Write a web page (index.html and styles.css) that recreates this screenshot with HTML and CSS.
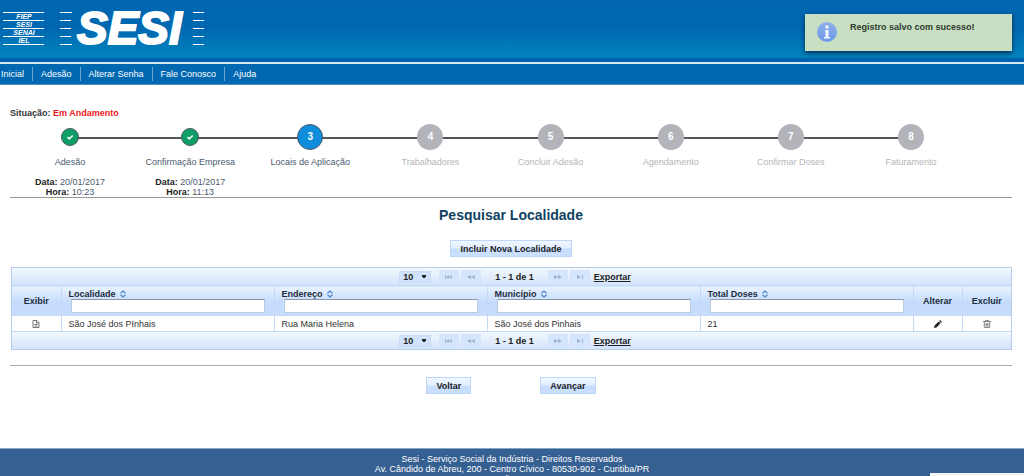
FILE: index.html
```html
<!DOCTYPE html>
<html lang="pt-BR">
<head>
<meta charset="utf-8">
<title>SESI - Pesquisar Localidade</title>
<link rel="stylesheet" href="styles.css">
</head>
<body>
<svg class="sprite" aria-hidden="true">
  <symbol id="check" viewBox="0 0 10 10"><path d="M2.500 5l1.800 1.800L7.700 3.500" fill="none" stroke="#fff" stroke-width="1.700"/></symbol>
  <symbol id="sort" viewBox="0 0 6 8"><path d="M.5 3.200L3 1l2.500 2.200M.5 4.800L3 7l2.500-2.200" fill="none" stroke="#4a84c8" stroke-width="1.200"/></symbol>
  <symbol id="first" viewBox="0 0 8 6"><path d="M0 1h1v4H0zM4 1v4L1 3zM7 1v4L4 3z" fill="#9bb4cf"/></symbol>
  <symbol id="prev" viewBox="0 0 8 6"><path d="M4 1v4L0 3zM8 1v4L4 3z" fill="#9bb4cf"/></symbol>
  <symbol id="next" viewBox="0 0 8 6"><path d="M0 1v4l4-2zM4 1v4l4-2z" fill="#9bb4cf"/></symbol>
  <symbol id="last" viewBox="0 0 8 6"><path d="M1 1v4l4-2zM6 1h1v4H6z" fill="#9bb4cf"/></symbol>
</svg>

<header class="header">
  <svg class="brand" width="206" height="58" viewBox="0 0 206 58" role="img" aria-label="FIEP SESI SENAI IEL - SESI">
    <path d="M3 12.500h41M3 20.500h41M3 28.500h41M3 36.500h41M3 44.500h41M60 12.500h12M60 20.500h11M60 28.500h11M60 36.500h11M60 44.500h12M193 12.500h11M193 20.500h11M193 28.500h11M193 36.500h11M193 44.500h11" stroke="#fff" stroke-width="1.200"/>
    <g class="brand-small">
      <text x="24" y="19">FIEP</text>
      <text x="24" y="27">SESI</text>
      <text x="24" y="35">SENAI</text>
      <text x="24" y="43">IEL</text>
    </g>
    <text class="brand-name" x="77" y="44">SESI</text>
  </svg>
</header>

<div class="toast" role="status">
  <svg width="22" height="22" viewBox="0 0 22 22" aria-hidden="true">
    <defs><linearGradient id="info" x1="0" y1="0" x2="0" y2="1"><stop offset="0" stop-color="#8fb2e8"/><stop offset="1" stop-color="#6c97ea"/></linearGradient></defs>
    <circle cx="11" cy="11" r="10" fill="url(#info)"/>
    <path d="M9.500 4.500h3v3h-3zM9 9h3.500v7H14v1.500H8V16h1.500v-5.500H9z" fill="#f3f8ff"/>
  </svg>
  <p>Registro salvo com sucesso!</p>
</div>

<nav class="nav">
  <a href="#">Inicial</a><a href="#">Adesão</a><a href="#">Alterar Senha</a><a href="#">Fale Conosco</a><a href="#">Ajuda</a>
</nav>

<main class="main">
  <p class="status">Situação: <span>Em Andamento</span></p>

  <ol class="steps">
    <li class="done"><span class="dot"><svg width="10" height="10"><use href="#check"/></svg></span><span class="name">Adesão</span><span><b>Data:</b> 20/01/2017</span><span><b>Hora:</b> 10:23</span></li>
    <li class="done"><span class="dot"><svg width="10" height="10"><use href="#check"/></svg></span><span class="name">Confirmação Empresa</span><span><b>Data:</b> 20/01/2017</span><span><b>Hora:</b> 11:13</span></li>
    <li class="current"><span class="dot">3</span><span class="name">Locais de Aplicação</span></li>
    <li><span class="dot">4</span><span class="name">Trabalhadores</span></li>
    <li><span class="dot">5</span><span class="name">Concluir Adesão</span></li>
    <li><span class="dot">6</span><span class="name">Agendamento</span></li>
    <li><span class="dot">7</span><span class="name">Confirmar Doses</span></li>
    <li><span class="dot">8</span><span class="name">Faturamento</span></li>
  </ol>

  <h1>Pesquisar Localidade</h1>
  <div class="center"><button class="btn" type="button">Incluir Nova Localidade</button></div>

  <section class="grid">
    <div class="pager">
      <select aria-label="Linhas por página"><option>10</option></select>
      <div class="pager-group">
        <button type="button" aria-label="Primeira" disabled><svg width="8" height="6"><use href="#first"/></svg></button>
        <button type="button" aria-label="Anterior" disabled><svg width="8" height="6"><use href="#prev"/></svg></button>
      </div>
      <span class="range">1 - 1 de 1</span>
      <div class="pager-group">
        <button type="button" aria-label="Próxima" disabled><svg width="8" height="6"><use href="#next"/></svg></button>
        <button type="button" aria-label="Última" disabled><svg width="8" height="6"><use href="#last"/></svg></button>
        <a href="#">Exportar</a>
      </div>
    </div>
    <table>
      <colgroup><col class="col-icon"><col><col><col><col><col class="col-icon"><col class="col-icon"></colgroup>
      <thead>
        <tr>
          <th class="icon-cell">Exibir</th>
          <th><label for="f1">Localidade <svg width="6" height="8"><use href="#sort"/></svg></label><input id="f1" type="text"></th>
          <th><label for="f2">Endereço <svg width="6" height="8"><use href="#sort"/></svg></label><input id="f2" type="text"></th>
          <th><label for="f3">Município <svg width="6" height="8"><use href="#sort"/></svg></label><input id="f3" type="text"></th>
          <th><label for="f4">Total Doses <svg width="6" height="8"><use href="#sort"/></svg></label><input id="f4" type="text"></th>
          <th class="icon-cell">Alterar</th>
          <th class="icon-cell">Excluir</th>
        </tr>
      </thead>
      <tbody>
        <tr>
          <td class="icon-cell"><button class="icon" type="button" aria-label="Exibir"><svg width="8" height="8" viewBox="0 0 8 8"><path d="M1 .5h4l2 2v5H1zM4.500.5v2.500H7M2.500 4.500h3M2.500 6h3" fill="none" stroke="#555" stroke-width=".8"/></svg></button></td>
          <td>São José dos PInhais</td>
          <td>Rua Maria Helena</td>
          <td>São José dos Pinhais</td>
          <td>21</td>
          <td class="icon-cell"><button class="icon" type="button" aria-label="Alterar"><svg width="8" height="8" viewBox="0 0 8 8"><path d="M0 8l.6-2.500L4.700 1.400l1.900 1.900L2.500 7.400zM5.200.9L6.100 0 8 1.900l-.9.9z" fill="#222"/></svg></button></td>
          <td class="icon-cell"><button class="icon" type="button" aria-label="Excluir"><svg width="8" height="8" viewBox="0 0 8 8"><path d="M0 1.500h8M2.500 1.500v-1h3v1M1.300 1.500v6h5.400v-6M3 3v3.500M4 3v3.500M5 3v3.500" fill="none" stroke="#555" stroke-width=".7"/></svg></button></td>
        </tr>
      </tbody>
    </table>
    <div class="pager">
      <select aria-label="Linhas por página"><option>10</option></select>
      <div class="pager-group">
        <button type="button" aria-label="Primeira" disabled><svg width="8" height="6"><use href="#first"/></svg></button>
        <button type="button" aria-label="Anterior" disabled><svg width="8" height="6"><use href="#prev"/></svg></button>
      </div>
      <span class="range">1 - 1 de 1</span>
      <div class="pager-group">
        <button type="button" aria-label="Próxima" disabled><svg width="8" height="6"><use href="#next"/></svg></button>
        <button type="button" aria-label="Última" disabled><svg width="8" height="6"><use href="#last"/></svg></button>
        <a href="#">Exportar</a>
      </div>
    </div>
  </section>

  <div class="actions">
    <button class="btn" type="button">Voltar</button>
    <button class="btn" type="button">Avançar</button>
  </div>
</main>

<footer class="footer">
  <p>Sesi - Serviço Social da Indústria - Direitos Reservados</p>
  <p>Av. Cândido de Abreu, 200 - Centro Cívico - 80530-902 - Curitiba/PR</p>
  <p>Versão 2.0.2</p>
</footer>
<div class="status-popup"></div>
</body>
</html>
```
FILE: styles.css
```css
* { box-sizing: border-box; }

body {
  display: flex;
  flex-direction: column;
  height: 100vh;
  margin: 0;
  overflow: hidden;
  background: #fff;
  color: #333;
  font: 9px/10px "Liberation Sans", Arial, sans-serif;
}

p, h1, ol { margin: 0; padding: 0; }
button, input, select { font: inherit; color: inherit; }
.sprite { position: absolute; width: 0; height: 0; }

.header {
  flex: none;
  height: 62px;
  background: linear-gradient(#0066b0 0, #0068b1 45%, #0083bd 57px, #0061ae 59px);
}
.brand { display: block; }
.brand text { fill: #fff; font-family: "Liberation Sans", Arial, sans-serif; font-weight: bold; font-style: italic; }
.brand .brand-small text { font-size: 7px; text-anchor: middle; }
.brand .brand-name { font-size: 46px; stroke: #fff; stroke-width: 2; }

.toast {
  position: absolute;
  top: 14px;
  right: 12px;
  display: flex;
  gap: 12px;
  width: 207px;
  height: 37px;
  padding: 7px 11px;
  background: #c9dfc4;
  color: #2e3b2c;
  font-weight: bold;
  box-shadow: 0 2px 5px #002c50;
}
.toast p { padding-top: 1px; }

.nav {
  display: flex;
  flex: none;
  align-items: center;
  height: 23px;
  border-top: 2px solid #d5e8f6;
  border-bottom: 1px solid #4d92c6;
  background: #0067b1;
}
.nav a { padding: 2px 8px; color: #fff; text-decoration: none; border-right: 1px solid #6ba5d1; }
.nav a:first-child { padding-left: 1px; }
.nav a:last-child { border: 0; }

.main { flex: 1; padding: 23px 12px 0 10px; }
.status { font-weight: bold; }
.status span { color: #f01820; }

.steps {
  display: grid;
  grid-template-columns: repeat(8, 1fr);
  height: 80px;
  padding: 6px 41px 0 0;
  border-bottom: 1px solid #999;
  list-style: none;
}
.steps li {
  position: relative;
  display: flex;
  flex-direction: column;
  align-items: center;
  color: #b4b5b8;
}
.steps li + li::before {
  content: "";
  position: absolute;
  top: 13px;
  right: 50%;
  width: 100%;
  height: 2px;
  background: #55565a;
}
.dot {
  z-index: 1;
  display: flex;
  align-items: center;
  justify-content: center;
  width: 26px;
  height: 26px;
  margin-bottom: 7px;
  border-radius: 50%;
  background: #b3b4b9;
  color: #fff;
  font-size: 10px;
  font-weight: bold;
}
.steps .name { margin-bottom: 10px; }
.steps .done, .steps .current { color: #4c5a6e; }
.steps b { color: #222; }
.done .dot { width: 18px; height: 18px; margin: 4px 0 11px; border: 1px solid #4e5a5c; background: #0f9d68; }
.current .dot { border: 1px solid #4e5a6c; background: #0d8ddb; }

h1 { margin-top: 9px; color: #0f4262; font-size: 14px; line-height: 16px; text-align: center; }
.center { display: flex; justify-content: center; margin: 17px 0 10px; }
.btn {
  height: 17px;
  padding: 0 9px;
  border: 1px solid #bed6f8;
  background: linear-gradient(#f1f7ff 0, #e1edff 48%, #c6ddff 54%, #cbe0ff 100%);
  color: #222;
  font-weight: bold;
}

.grid { margin-left: 1px; border: 1px solid #b4cdea; }
.pager {
  display: flex;
  align-items: center;
  justify-content: center;
  gap: 8px;
  height: 17px;
  padding-left: 7px;
  background: linear-gradient(#f2f7fd, #d4e4fb);
  color: #222;
  font-weight: bold;
}
.pager select {
  width: 32px;
  height: 12px;
  padding: 0 0 0 3px;
  appearance: none;
  border: 1px solid #c8dcf8;
  border-radius: 0;
  background: conic-gradient(from -32deg at 50% 100%, #222 64deg, transparent 0) 21px 3px / 6px 4px no-repeat, #cfe1fb;
  line-height: 10px;
}
.pager-group { display: flex; align-items: center; gap: 2px; }
.pager-group button {
  display: flex;
  align-items: center;
  justify-content: center;
  width: 20px;
  height: 13px;
  padding: 0;
  border: 0;
  background: #d5e5fb;
}
.range { padding: 0 6px; }
.pager a { margin-left: 2px; color: #222; }

table { width: 100%; border-collapse: collapse; table-layout: fixed; }
.col-icon { width: 49px; }
th, td { border: 1px solid #c3d9f5; border-width: 1px 0 1px 1px; text-align: left; }
tr > :first-child { border-left: 0; }
th { height: 30px; padding: 1px 7px 0; background: linear-gradient(#eaf3ff, #c4dbfb 55%, #c6ddff); color: #222c3c; }
th label { display: block; }
th svg { vertical-align: -1px; margin-left: 2px; }
th input {
  display: block;
  width: calc(100% - 4px);
  height: 14px;
  margin: 0 0 0 2px;
  padding: 0 2px;
  border: 1px solid #bbcbe0;
  border-top-color: #8c98aa;
  background: #fff;
}
td { height: 16px; padding: 0 7px; }
.icon-cell { padding: 0; text-align: center; }
.icon { display: flex; margin: 0 auto; padding: 0; border: 0; background: none; }

.actions {
  display: flex;
  justify-content: center;
  gap: 69px;
  margin-top: 15px;
  padding: 11px 0 0;
  border-top: 1px solid #aaa;
}

.footer {
  flex: none;
  height: 28px;
  padding-top: 5px;
  border-top: 1px solid #87a6c7;
  background: #365f92;
  color: #fff;
  text-align: center;
}
.status-popup {
  position: absolute;
  right: 0;
  bottom: 0;
  width: 94px;
  height: 3px;
  background: #f4f7fa;
}
```
